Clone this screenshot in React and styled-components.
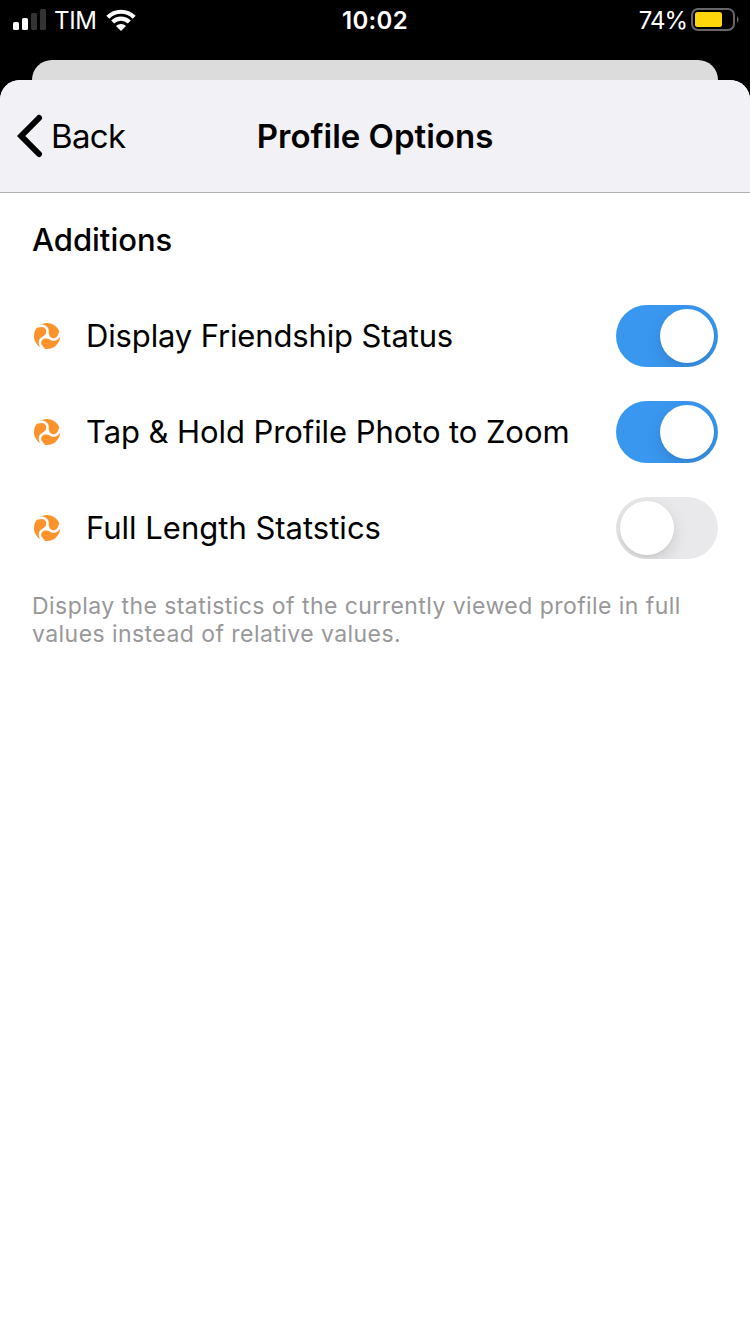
import React from 'react';
import styled, { createGlobalStyle } from 'styled-components';

const GlobalStyle = createGlobalStyle`
  * { box-sizing: border-box; }
  body { margin: 0; background: #000; font-family: Inter, "Liberation Sans", sans-serif; color: #000; }
`;

const Screen = styled.div`
  width: 750px;
  height: 1334px;
  display: flex;
  flex-direction: column;
  overflow: hidden;
  background: #000;
`;

const StatusBar = styled.header`
  height: 60px;
  display: grid;
  grid-template-columns: 1fr auto 1fr;
  align-items: start;
  padding: 8px 11px 0 13px;
  color: #fff;
`;

const StatusGroup = styled.div`
  display: flex;
  align-items: center;
  height: 24px;
  justify-content: ${({ $end }) => ($end ? 'flex-end' : 'flex-start')};
`;

const StatusText = styled.span`
  font-size: 24px;
  line-height: 24px;
  padding-top: 2px;
  font-weight: ${({ $weight }) => $weight || 400};
  letter-spacing: ${({ $spacing }) => $spacing || 0}px;
  white-space: nowrap;
`;

const Clock = styled(StatusText)`
  margin-right: 2px;
`;

const Carrier = styled(StatusText)`
  margin: 0 9px 0 7px;
`;

const Charge = styled(StatusText)`
  margin-right: 4px;
`;

const BackSheet = styled.div`
  flex: none;
  height: 20px;
  margin: 0 32px;
  border-radius: 20px 20px 0 0;
  background: #dcdcdc;
`;

const Sheet = styled.main`
  flex: 1;
  background: #fff;
  border-radius: 20px 20px 0 0;
  overflow: hidden;
`;

const NavBar = styled.nav`
  height: 113px;
  display: grid;
  grid-template-columns: 1fr auto 1fr;
  align-items: center;
  padding: 0 16px;
  background: #f2f1f6;
  border-bottom: 1px solid #b2b1b5;
`;

const BackButton = styled.button`
  display: flex;
  align-items: center;
  gap: 7px;
  padding: 0;
  border: 0;
  background: none;
  color: #000;
  font: 400 33px/42px Inter, sans-serif;
  letter-spacing: -0.65px;
`;

const Title = styled.h1`
  margin: 0;
  font-size: 33px;
  line-height: 42px;
  font-weight: 600;
  letter-spacing: 0;
`;

const Section = styled.section`
  padding: 0 32px;
`;

const SectionTitle = styled.h2`
  margin: 0;
  height: 95px;
  font-size: 31px;
  line-height: 93px;
  font-weight: 500;
  letter-spacing: 0;
`;

const OptionRow = styled.label`
  height: 96px;
  display: flex;
  align-items: center;
`;

const OptionName = styled.span`
  flex: 1;
  margin-left: 24px;
  padding-bottom: 1px;
  font-size: 31px;
  line-height: 40px;
  letter-spacing: ${({ $spacing }) => $spacing}px;
  white-space: nowrap;
`;

const Switch = styled.span`
  flex: none;
  display: flex;
  width: 102px;
  height: 62px;
  padding: 4px;
  border-radius: 31px;
  overflow: hidden;
  justify-content: ${({ $on }) => ($on ? 'flex-end' : 'flex-start')};
  background: ${({ $on }) => ($on ? '#3997f0' : '#e9e9eb')};
`;

const Knob = styled.span`
  width: 54px;
  height: 54px;
  border-radius: 50%;
  background: #fff;
  box-shadow: 0 6px 16px rgba(0, 0, 0, 0.13), 0 2px 2px rgba(0, 0, 0, 0.03);
`;

const Footnote = styled.p`
  margin: 16px 0 0;
  font-size: 23px;
  line-height: 28px;
  letter-spacing: 0.44px;
  color: #98989a;
`;

const Signal = () => (
  <svg width="34" height="22" viewBox="0 0 34 22">
    <rect x="0" y="13" width="6" height="8" rx="1.5" fill="#fff" />
    <rect x="9" y="9" width="6" height="12" rx="1.5" fill="#fff" />
    <rect x="18" y="4" width="6" height="17" rx="1.5" fill="#333" />
    <rect x="27" y="0" width="6" height="21" rx="1.5" fill="#333" />
  </svg>
);

const Wifi = () => (
  <svg width="30" height="22" viewBox="0 0 30 22">
    <g fill="none" stroke="#fff" strokeWidth="4.2">
      <path d="M1.8 8.3A18.5 18.5 0 0 1 28.2 8.3" />
      <path d="M6.7 13.1A11.7 11.7 0 0 1 23.3 13.1" />
    </g>
    <path d="M15 22L10 17A7.2 7.2 0 0 1 20 17Z" fill="#fff" />
  </svg>
);

const Battery = () => (
  <svg width="48" height="24" viewBox="0 0 48 24">
    <rect x="1" y="1" width="42" height="21" rx="6" fill="none" stroke="#666" strokeWidth="2" />
    <rect x="4" y="4" width="27" height="15" rx="2.5" fill="#ffd60a" />
    <path d="M46 8Q49 11.5 46 15Z" fill="#666" />
  </svg>
);

const Chevron = () => (
  <svg width="28" height="44" viewBox="0 0 28 44">
    <path d="M23 4L5.2 22L23 40" fill="none" stroke="#000" strokeWidth="6" strokeLinecap="round" />
  </svg>
);

const Swirl = () => (
  <svg width="30" height="30" viewBox="0 0 30 30">
    <circle cx="15" cy="15" r="13" fill="#fb922c" />
    <g fill="#fff" transform="translate(15 15)">
      <circle r="2" />
      {[0, 120, 240].map((angle) => (
        <path
          key={angle}
          transform={`rotate(${angle})`}
          d="M-8.4 -10.8C-6 -12 -2.8 -11.6 -0.6 -9.8C1.4 -8.2 1.9 -6.2 1.7 -4.4C1.6 -2.8 1.8 -1.6 2.6 -0.4L0 1.5L-2 -0.4C-0.9 -2.6 -0.6 -4.6 -1.1 -6.2C-2.2 -9 -5.4 -9.8 -10.2 -8Z"
        />
      ))}
    </g>
  </svg>
);

const options = [
  { name: 'Display Friendship Status', on: true, spacing: -0.14 },
  { name: 'Tap & Hold Profile Photo to Zoom', on: true, spacing: -0.08 },
  { name: 'Full Length Statstics', on: false, spacing: 0 },
];

export default function App() {
  return (
    <Screen>
      <GlobalStyle />
      <StatusBar>
        <StatusGroup>
          <Signal />
          <Carrier $spacing={-0.3}>TIM</Carrier>
          <Wifi />
        </StatusGroup>
        <StatusGroup>
          <Clock $weight={600} $spacing={0.3}>10:02</Clock>
        </StatusGroup>
        <StatusGroup $end>
          <Charge $spacing={-1}>74%</Charge>
          <Battery />
        </StatusGroup>
      </StatusBar>
      <BackSheet />
      <Sheet>
        <NavBar>
          <BackButton>
            <Chevron />
            Back
          </BackButton>
          <Title>Profile Options</Title>
        </NavBar>
        <Section>
          <SectionTitle>Additions</SectionTitle>
          {options.map(({ name, on, spacing }) => (
            <OptionRow key={name}>
              <Swirl />
              <OptionName $spacing={spacing}>{name}</OptionName>
              <Switch $on={on}>
                <Knob />
              </Switch>
            </OptionRow>
          ))}
          <Footnote>
            Display the statistics of the currently viewed profile in full
            <br />
            values instead of relative values.
          </Footnote>
        </Section>
      </Sheet>
    </Screen>
  );
}
